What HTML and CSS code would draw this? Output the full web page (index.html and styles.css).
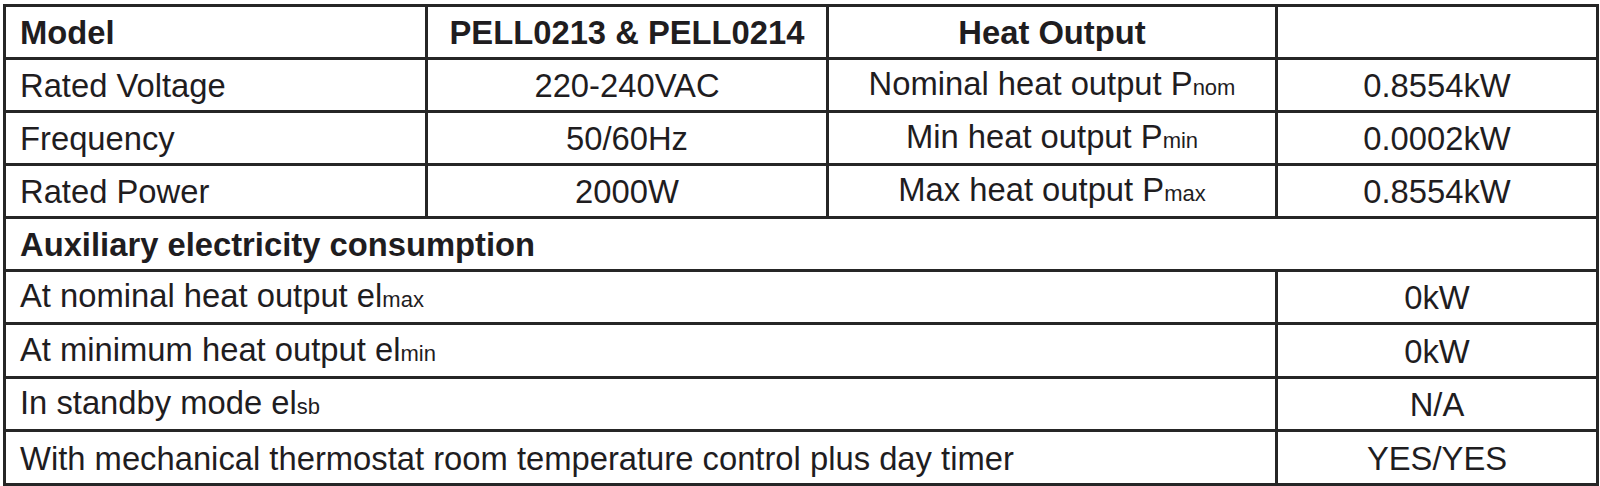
FILE: index.html
```html
<!DOCTYPE html>
<html lang="en">
<head>
<meta charset="utf-8">
<title>PELL0213 &amp; PELL0214 specifications</title>
<link rel="stylesheet" href="styles.css">
</head>
<body>
<table class="spec">
  <colgroup>
    <col class="c1">
    <col class="c2">
    <col class="c3">
    <col class="c4">
  </colgroup>
  <tbody>
    <tr class="head">
      <th class="left">Model</th>
      <th>PELL0213 &amp; PELL0214</th>
      <th>Heat Output</th>
      <th></th>
    </tr>
    <tr>
      <td class="left">Rated Voltage</td>
      <td>220-240VAC</td>
      <td>Nominal heat output P<span class="sub">nom</span></td>
      <td>0.8554kW</td>
    </tr>
    <tr>
      <td class="left">Frequency</td>
      <td>50/60Hz</td>
      <td>Min heat output P<span class="sub">min</span></td>
      <td>0.0002kW</td>
    </tr>
    <tr>
      <td class="left">Rated Power</td>
      <td>2000W</td>
      <td>Max heat output P<span class="sub">max</span></td>
      <td>0.8554kW</td>
    </tr>
    <tr class="head">
      <th class="left" colspan="4">Auxiliary electricity consumption</th>
    </tr>
    <tr>
      <td class="left" colspan="3">At nominal heat output el<span class="sub">max</span></td>
      <td>0kW</td>
    </tr>
    <tr class="tall">
      <td class="left" colspan="3">At minimum heat output el<span class="sub">min</span></td>
      <td>0kW</td>
    </tr>
    <tr>
      <td class="left" colspan="3">In standby mode el<span class="sub">sb</span></td>
      <td>N/A</td>
    </tr>
    <tr class="tall">
      <td class="left" colspan="3">With mechanical thermostat room temperature control plus day timer</td>
      <td>YES/YES</td>
    </tr>
  </tbody>
</table>
</body>
</html>
```

FILE: styles.css
```css
html, body {
  margin: 0;
  padding: 0;
  background: #ffffff;
}

body {
  padding: 4px 0 0 3px;
  font-family: "Liberation Sans", Arial, sans-serif;
  color: #1f1d1f;
}

.spec {
  border-collapse: collapse;
  table-layout: fixed;
  width: 1593px;
  border: 3px solid #262626;
}

.c1 { width: 422px; }
.c2 { width: 401px; }
.c3 { width: 449px; }
.c4 { width: 321px; }

.spec tr {
  height: 53px;
}

.spec tr.tall {
  height: 54px;
}

.spec th,
.spec td {
  border: 3px solid #262626;
  font-size: 32.75px;
  line-height: 36px;
  padding: 2px 14px 0;
  text-align: center;
  vertical-align: middle;
  white-space: nowrap;
}

.spec th {
  font-weight: 700;
}

.spec .left {
  text-align: left;
}

.sub {
  font-size: 22px;
}
```
